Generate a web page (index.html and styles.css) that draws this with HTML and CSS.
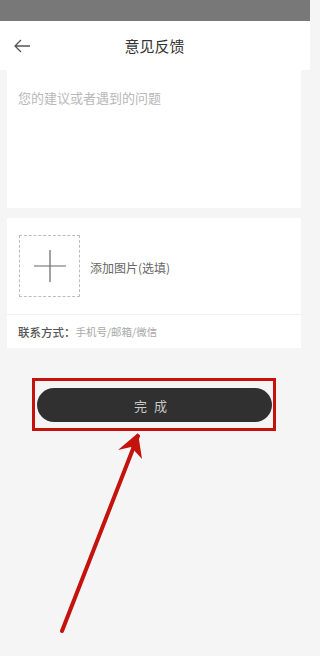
FILE: index.html
```html
<!DOCTYPE html>
<html lang="zh">
<head>
<meta charset="utf-8">
<link rel="stylesheet" href="styles.css">
</head>
<body>
<div class="status"></div>
<header class="nav">
  <svg class="back" width="18" height="14" viewBox="0 0 18 14"><path d="M17 7H2M8 1L2 7l6 6" fill="none" stroke="#555" stroke-width="1.3"/></svg>
  <div class="title">意见反馈</div>
</header>
<main class="content">
  <section class="card text-card">
    <div class="placeholder">您的建议或者遇到的问题</div>
  </section>
  <section class="card upload-card">
    <div class="upload-row">
      <div class="upload-box">
        <svg width="32" height="32" viewBox="0 0 32 32"><path d="M16 0V32M0 16H32" stroke="#666" stroke-width="1.2"/></svg>
      </div>
      <span class="upload-label">添加图片(选填)</span>
    </div>
    <div class="contact-row">
      <span class="contact-label">联系方式：</span><span class="contact-hint">手机号/邮箱/微信</span>
    </div>
  </section>
  <div class="highlight">
    <button class="done">完成</button>
  </div>
</main>
<svg class="arrow" width="310" height="656" viewBox="0 0 310 656">
  <path d="M62 631L138 436" stroke="#c4120c" stroke-width="4" stroke-linecap="round" fill="none"/>
  <path d="M138 433L118 450L131 447L142 459Z" fill="#c4120c"/>
</svg>
</body>
</html>
```
FILE: styles.css
```css
html, body {
  margin: 0;
  padding: 0;
}
body {
  width: 310px;
  height: 656px;
  background: #f5f5f5;
  font-family: "Noto Sans CJK SC", "Noto Sans", sans-serif;
  position: relative;
  overflow: hidden;
}
.status {
  height: 21px;
  background: #787878;
}
.nav {
  height: 49px;
  background: #fff;
  display: flex;
  align-items: center;
  justify-content: center;
  position: relative;
}
.back {
  position: absolute;
  left: 13px;
  top: 18px;
}
.title {
  font-size: 15px;
  color: #333;
  margin-left: -1px;
}
.content {
  padding: 0 9px 0 7px;
  display: flex;
  flex-direction: column;
}
.card {
  background: #fff;
}
.text-card {
  height: 138px;
  box-sizing: border-box;
  padding: 18px 11px;
}
.placeholder {
  font-size: 13px;
  color: #b8b8b8;
  line-height: 20px;
}
.upload-card {
  margin-top: 10px;
}
.upload-row {
  display: flex;
  align-items: center;
  padding: 17px 12px;
  border-bottom: 1px solid #f0f0f0;
}
.upload-box {
  width: 61px;
  height: 62px;
  box-sizing: border-box;
  border: 1px dashed #bdbdbd;
  display: flex;
  align-items: center;
  justify-content: center;
}
.upload-label {
  margin-left: 10px;
  margin-top: 2px;
  font-size: 12px;
  color: #666;
}
.contact-row {
  height: 33px;
  display: flex;
  align-items: center;
  padding: 0 11px;
}
.contact-label {
  font-size: 11.5px;
  color: #555;
  font-weight: 500;
}
.contact-hint {
  font-size: 10.5px;
  color: #a8a8a8;
}
.highlight {
  margin: 30px 0 0 25px;
  width: 244px;
  height: 53px;
  box-sizing: border-box;
  border: 3.5px solid #c4120c;
  padding: 7px 1.5px 4px;
}
.done {
  display: block;
  width: 100%;
  height: 34px;
  border: none;
  border-radius: 17px;
  background: #303030;
  color: #c8c8c8;
  font-family: "Noto Sans CJK SC", sans-serif;
  font-size: 13px;
  letter-spacing: 7px;
  padding: 0 0 0 0;
}
.arrow {
  position: absolute;
  left: 0;
  top: 0;
  pointer-events: none;
}
```
